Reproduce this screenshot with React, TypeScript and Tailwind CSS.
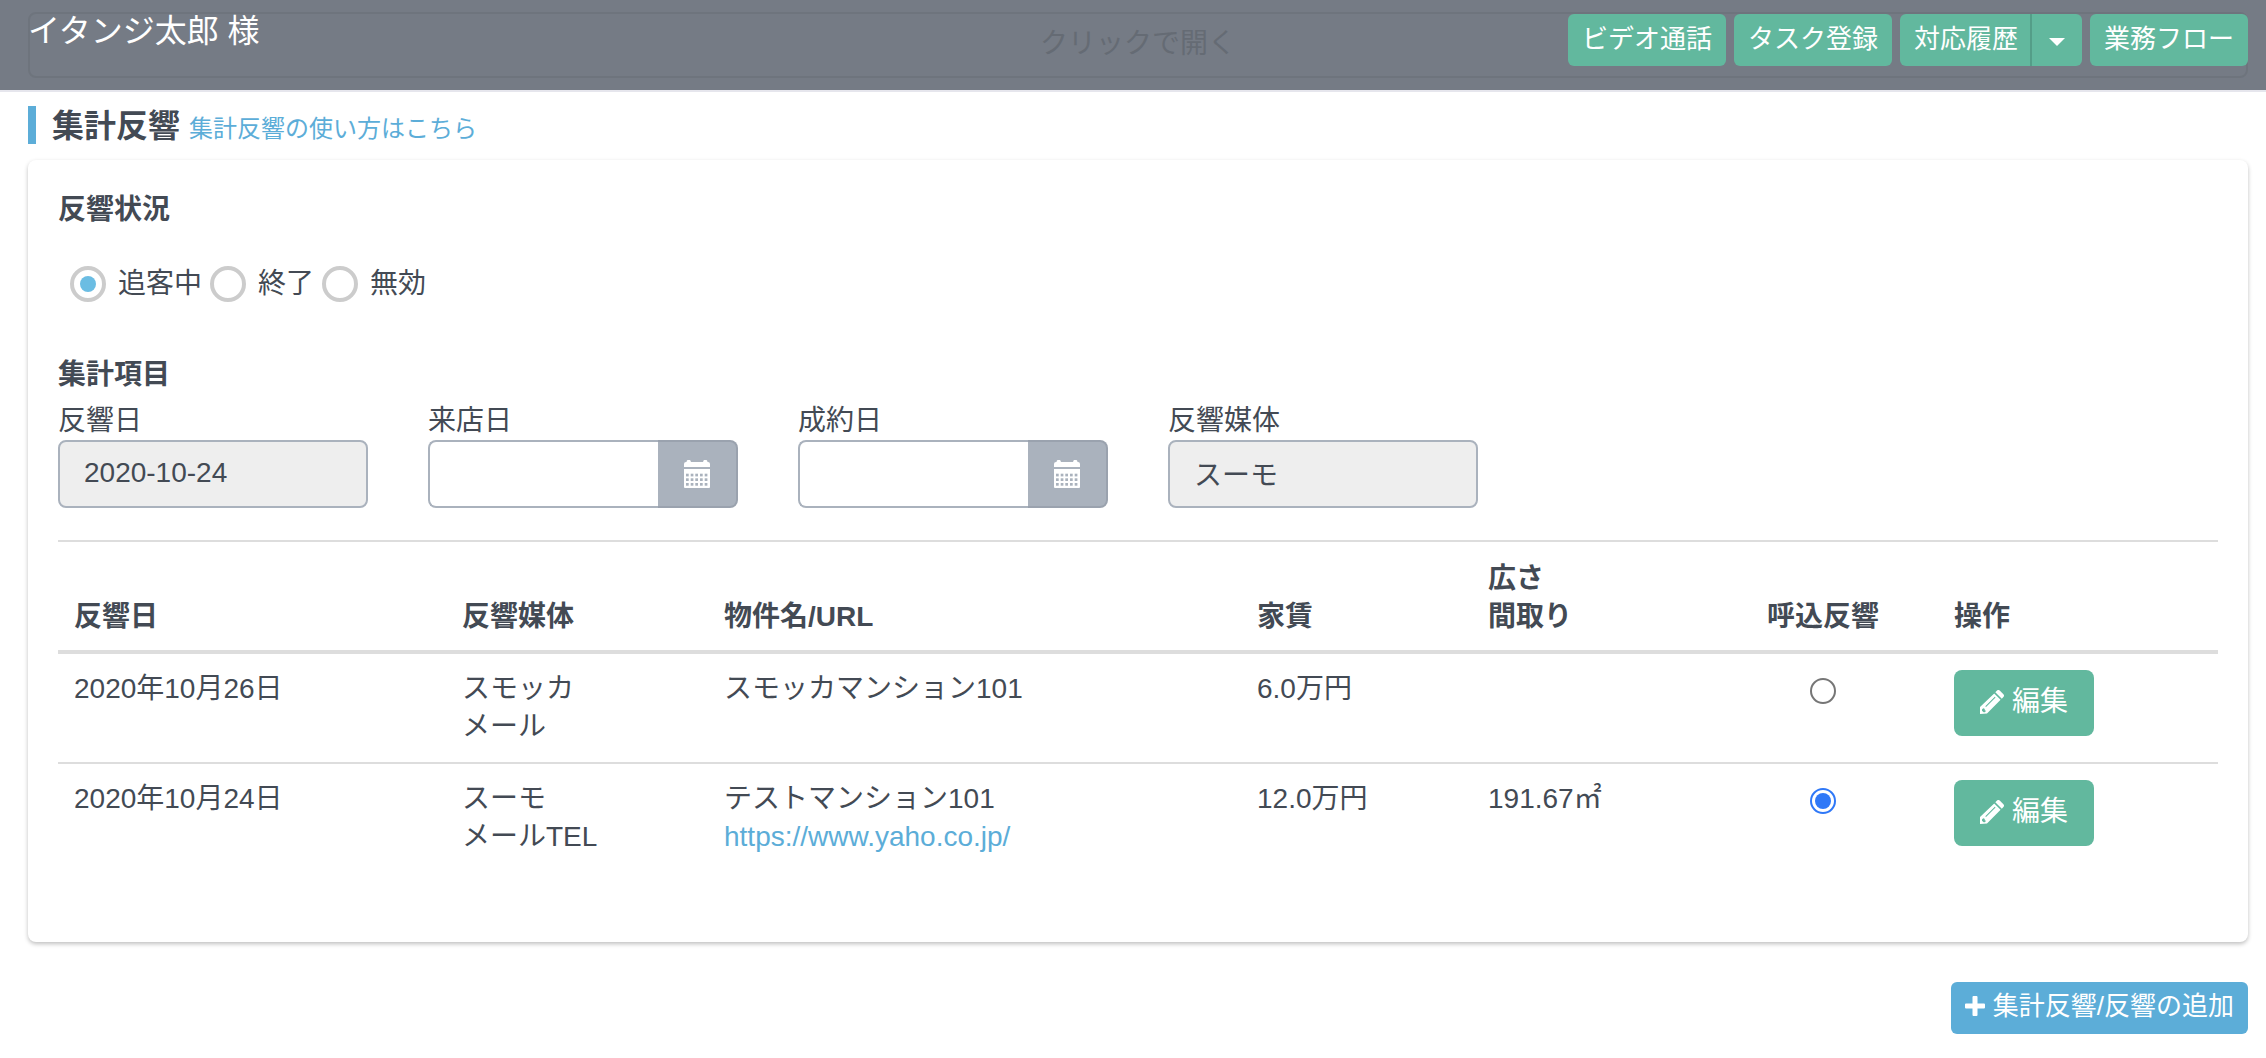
import { useState } from 'react';
import type { ReactNode } from 'react';

type Inquiry = {
  id: string;
  date: string;
  media: string[];
  property: string;
  url?: string;
  rent: string;
  size: string;
};

const inquiries: Inquiry[] = [
  {
    id: 'smocca',
    date: '2020年10月26日',
    media: ['スモッカ', 'メール'],
    property: 'スモッカマンション101',
    rent: '6.0万円',
    size: '',
  },
  {
    id: 'suumo',
    date: '2020年10月24日',
    media: ['スーモ', 'メールTEL'],
    property: 'テストマンション101',
    url: 'https://www.yaho.co.jp/',
    rent: '12.0万円',
    size: '191.67㎡',
  },
];

const statuses = ['追客中', '終了', '無効'];

function CalendarIcon() {
  const rows = [13.7, 18.3, 23];
  const cols = [2, 6.7, 11.3, 16, 20.7];

  return (
    <svg width="26" height="28" viewBox="0 0 26 28" fill="none" aria-hidden="true">
      <path
        d="M0 7V4a2 2 0 0 1 2-2h.5a2.200 2.200 0 0 1 4.400 0h12.200a2.200 2.200 0 0 1 4.400 0h.5a2 2 0 0 1 2 2v3z"
        fill="#fff"
      />
      <path d="M0 9h26v18a1 1 0 0 1-1 1H1a1 1 0 0 1-1-1z" fill="#fff" />
      {rows.map((y) =>
        cols.map((x) => (
          <rect key={`${x}-${y}`} x={x} y={y} width="2.7" height="2.7" fill="#aab2bd" />
        ))
      )}
    </svg>
  );
}

function PencilIcon() {
  return (
    <svg width="24" height="24" viewBox="0 0 24 24" fill="#fff" aria-hidden="true">
      <path d="M15.300 2.200L17 .6a1.900 1.900 0 0 1 2.700 0l3.700 3.700a1.900 1.900 0 0 1 0 2.700l-1.600 1.700z" />
      <path
        fillRule="evenodd"
        d="M14.200 3.400l6.400 6.400L7 23.500l-7 .5v-7zM3.200 18.200l-1.200 1.200v1.400l1.600 1.400h1.200l1.400-1.400-1.300-.4-.3-1.600zM14.800 6.800l-9.500 9.500.7.7 9.500-9.500z"
      />
    </svg>
  );
}

function PlusIcon() {
  return (
    <svg width="20" height="20" viewBox="0 0 20 20" fill="#fff" aria-hidden="true">
      <path d="M8.500 0h3a1 1 0 0 1 1 1v6.500H19a1 1 0 0 1 1 1v3a1 1 0 0 1-1 1h-6.500V19a1 1 0 0 1-1 1h-3a1 1 0 0 1-1-1v-6.500H1a1 1 0 0 1-1-1v-3a1 1 0 0 1 1-1h6.500V1a1 1 0 0 1 1-1z" />
    </svg>
  );
}

function HeaderButton({ children }: { children: ReactNode }) {
  return (
    <button type="button" className="h-[52px] rounded-md bg-[#62b89e] px-3.5 pb-0.5 text-[26px]">
      {children}
    </button>
  );
}

function Header() {
  return (
    <header className="grid border-b-2 border-[#e6e6ed] bg-[#757b85] py-3 pr-[18px] pl-7">
      <button
        type="button"
        className="col-start-1 row-start-1 h-[66px] rounded-lg border-2 border-[#6e747d] pb-0.5 text-[#656b74]"
      >
        クリックで開く
      </button>
      <div className="pointer-events-none col-start-1 row-start-1 flex items-start justify-between text-white">
        <h1 className="text-[32px] leading-[38px]">イタンジ太郎 様</h1>
        <div className="pointer-events-auto flex gap-2 pt-0.5">
          <HeaderButton>ビデオ通話</HeaderButton>
          <HeaderButton>タスク登録</HeaderButton>
          <div className="flex">
            <button
              type="button"
              className="h-[52px] rounded-l-md border-r-2 border-[#549e88] bg-[#62b89e] pr-3 pb-0.5 pl-3.5 text-[26px]"
            >
              対応履歴
            </button>
            <button
              type="button"
              aria-label="対応履歴メニュー"
              className="flex h-[52px] w-[50px] items-center justify-center rounded-r-md bg-[#62b89e] pt-1"
            >
              <svg width="16" height="8" viewBox="0 0 16 8" fill="#fff" aria-hidden="true">
                <path d="M0 0h16L8 8z" />
              </svg>
            </button>
          </div>
          <HeaderButton>業務フロー</HeaderButton>
        </div>
      </div>
    </header>
  );
}

function ReadOnlyField({ id, label, value }: { id: string; label: string; value: string }) {
  return (
    <div className="w-[310px]">
      <label htmlFor={id} className="block">
        {label}
      </label>
      <input
        id={id}
        type="text"
        readOnly
        value={value}
        className="block h-[68px] w-full rounded-lg border-2 border-[#aab2bd] bg-[#eeeeee] px-6 pb-0.5"
      />
    </div>
  );
}

function DateField({ id, label }: { id: string; label: string }) {
  const [value, setValue] = useState('');

  return (
    <div className="w-[310px]">
      <label htmlFor={id} className="block">
        {label}
      </label>
      <div className="flex">
        <input
          id={id}
          type="text"
          value={value}
          onChange={(e) => setValue(e.target.value)}
          className="h-[68px] min-w-0 flex-1 rounded-l-lg border-2 border-r-0 border-[#aab2bd] bg-white px-6"
        />
        <button
          type="button"
          aria-label={`${label}を選択`}
          className="flex h-[68px] w-20 items-center justify-center rounded-r-lg border-2 border-l-0 border-[#9aa2ae] bg-[#aab2bd]"
        >
          <CalendarIcon />
        </button>
      </div>
    </div>
  );
}

function StatusRadios() {
  const [status, setStatus] = useState('追客中');

  return (
    <div className="flex gap-2 pl-3">
      {statuses.map((name) => (
        <label key={name} className="flex h-9 items-center gap-3">
          <input
            type="radio"
            name="status"
            checked={status === name}
            onChange={() => setStatus(name)}
            className="grid size-9 appearance-none place-items-center rounded-full border-4 border-[#cccccc] bg-white before:size-4 before:rounded-full checked:before:bg-[#6bbde3]"
          />
          {name}
        </label>
      ))}
    </div>
  );
}

function InquiryTable() {
  const [calling, setCalling] = useState('suumo');

  return (
    <table className="w-full table-fixed border-t-2 border-[#dddddd] text-left">
      <colgroup>
        <col className="w-[388px]" />
        <col className="w-[262px]" />
        <col />
        <col className="w-[231px]" />
        <col className="w-[236px]" />
        <col className="w-[230px]" />
        <col className="w-[280px]" />
      </colgroup>
      <thead>
        <tr className="border-b-4 border-[#dddddd] align-bottom">
          <th className="px-4 pt-[18px] pb-3.5">反響日</th>
          <th className="px-4 pt-[18px] pb-3.5">反響媒体</th>
          <th className="px-4 pt-[18px] pb-3.5">物件名/URL</th>
          <th className="px-4 pt-[18px] pb-3.5">家賃</th>
          <th className="px-4 pt-[18px] pb-3.5">
            広さ
            <br />
            間取り
          </th>
          <th className="px-4 pt-[18px] pb-3.5 text-center">呼込反響</th>
          <th className="px-4 pt-[18px] pb-3.5">操作</th>
        </tr>
      </thead>
      <tbody>
        {inquiries.map((inquiry) => (
          <tr key={inquiry.id} className="border-t-2 border-[#dddddd] align-top">
            <td className="p-4">{inquiry.date}</td>
            <td className="p-4">
              {inquiry.media.map((line) => (
                <div key={line}>{line}</div>
              ))}
            </td>
            <td className="p-4">
              <div>{inquiry.property}</div>
              {inquiry.url && (
                <a href={inquiry.url} className="text-[#5cadd8]">
                  {inquiry.url}
                </a>
              )}
            </td>
            <td className="p-4">{inquiry.rent}</td>
            <td className="p-4">{inquiry.size}</td>
            <td className="p-4">
              <input
                type="radio"
                name="calling"
                aria-label={inquiry.property}
                checked={calling === inquiry.id}
                onChange={() => setCalling(inquiry.id)}
                className="mx-auto mt-2 grid size-[26px] appearance-none place-items-center rounded-full border-2 border-[#767676] bg-white before:size-4 before:rounded-full checked:border-[#2f78f7] checked:before:bg-[#2f78f7]"
              />
            </td>
            <td className="p-4">
              <button
                type="button"
                className="flex h-[66px] w-[140px] items-center justify-center gap-2 rounded-lg bg-[#62b89e] pb-0.5 text-white"
              >
                <PencilIcon />
                編集
              </button>
            </td>
          </tr>
        ))}
      </tbody>
    </table>
  );
}

export default function App() {
  return (
    <div className="min-h-screen bg-white font-['Liberation_Sans','Noto_Sans_CJK_JP',sans-serif] text-[28px] leading-[38px] text-[#434a54]">
      <Header />
      <main className="pt-3.5 pr-[18px] pb-6 pl-7">
        <div className="flex h-[38px] items-baseline gap-[9px] border-l-8 border-[#5cadd8] pl-4">
          <h2 className="text-[32px] leading-10 font-bold">集計反響</h2>
          <a href="#help" className="text-2xl leading-10 text-[#5cadd8]">
            集計反響の使い方はこちら
          </a>
        </div>

        <section className="mt-4 rounded-lg bg-white p-[30px] shadow-[0_2px_4px_rgba(0,0,0,0.25)]">
          <h3 className="leading-10 font-bold">反響状況</h3>
          <div className="mt-9">
            <StatusRadios />
          </div>

          <h3 className="mt-[54px] font-bold">集計項目</h3>
          <div className="mt-2 flex flex-wrap gap-[60px]">
            <ReadOnlyField id="inquiry-date" label="反響日" value="2020-10-24" />
            <DateField id="visit-date" label="来店日" />
            <DateField id="contract-date" label="成約日" />
            <ReadOnlyField id="inquiry-media" label="反響媒体" value="スーモ" />
          </div>

          <div className="mt-8 mb-10">
            <InquiryTable />
          </div>
        </section>

        <div className="mt-10 flex justify-end">
          <button
            type="button"
            className="flex h-[52px] items-center gap-2 rounded-md bg-[#5cadd8] px-3.5 pb-1 text-[26px] text-white"
          >
            <PlusIcon />
            集計反響/反響の追加
          </button>
        </div>
      </main>
    </div>
  );
}
